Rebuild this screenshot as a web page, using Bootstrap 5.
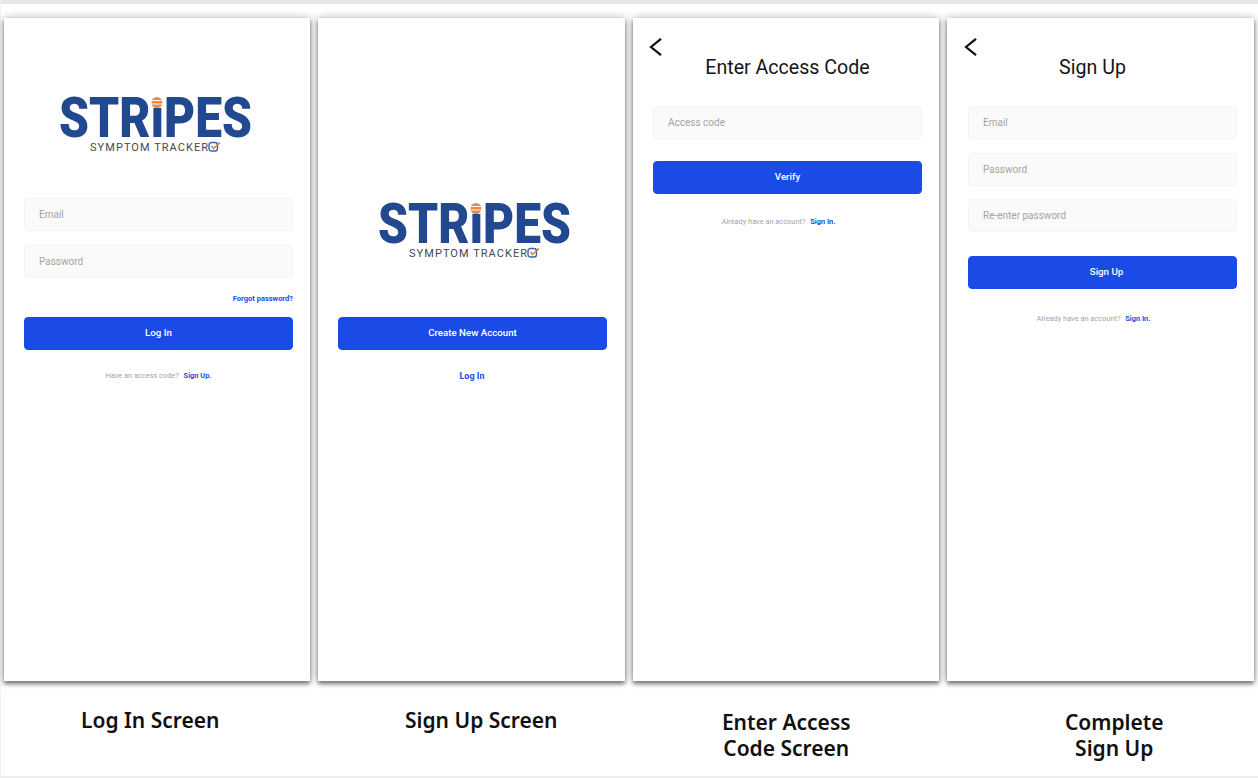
<!DOCTYPE html>
<html lang="en">
<head>
  <meta charset="UTF-8">
  <meta name="viewport" content="width=device-width, initial-scale=1.0">
  <title>Stripes Symptom Tracker — Screens</title>
  <link href="https://cdn.jsdelivr.net/npm/bootstrap@5.3.0/dist/css/bootstrap.min.css" rel="stylesheet">
  <script src="https://cdn.jsdelivr.net/npm/bootstrap@5.3.0/dist/js/bootstrap.bundle.min.js"></script>
  <style>
    html, body {
      height: 778px;
      overflow: hidden;
      background-color: #fff;
    }
    body {
      font-family: Roboto, sans-serif;
    }
    .board {
      height: 778px;
      border-top: 4px solid #e8e6e6;
      border-bottom: 2px solid #eeeeee;
      border-left: 1px solid #f2f2f2;
      padding: 14px 4px 0 3px;
    }
    .phones {
      gap: 8px;
    }
    .phone {
      flex: 0 0 306px;
      height: 663px;
      padding: 0 17px 0 20px;
      background-color: #fff;
      box-shadow: 0 3px 4px rgba(0, 0, 0, .45), 0 0 8px rgba(0, 0, 0, .3);
    }
    .phone-b {
      flex-basis: 307px;
      padding-right: 18px;
    }
    .phone-d {
      flex-basis: 307px;
      padding-left: 21px;
    }
    .logo-box {
      width: 200px;
      margin-left: 35px;
    }
    .logo-main {
      height: 40px;
      font-family: Roboto, sans-serif;
      font-weight: 900;
      font-size: 56px;
      line-height: 40px;
      color: #22488f;
      white-space: nowrap;
      transform: scaleX(.855);
      transform-origin: left center;
    }
    .logo-i {
      position: relative;
      display: inline-block;
    }
    .logo-ball {
      position: absolute;
      left: 1px;
      top: -1px;
      width: 13px;
      height: 11px;
    }
    .logo-sub {
      margin-top: 3px;
      padding-left: 31px;
      height: 14px;
      font-size: 11px;
      line-height: 14px;
      font-weight: 400;
      letter-spacing: 1.05px;
      color: #45474d;
      white-space: nowrap;
    }
    .logo-check {
      width: 13px;
      height: 11px;
      margin-left: -1px;
      vertical-align: -1px;
    }
    .logo-top-a { margin-top: 80px; margin-bottom: 43px; }
    .logo-top-b { margin-top: 186px; margin-bottom: 56px; margin-left: 40px; }
    .field {
      height: 33px;
      margin-bottom: 14px;
      padding: 0 14px;
      font-size: 10px;
      background-color: #fafafa;
      border: 1px solid #f4f4f4;
      border-radius: 4px;
    }
    .field-tight {
      margin-bottom: 13.5px;
    }
    .field::placeholder {
      color: #a3a3a3;
    }
    .go-btn {
      display: block;
      width: 100%;
      height: 33px;
      padding: 0;
      font-size: 9.7px;
      font-weight: 500;
      color: #fff;
      background-color: #1a4be6;
      border-color: #1a4be6;
      border-radius: 4px;
    }
    .blue-link {
      color: #1a4be6;
      font-weight: 700;
      text-decoration: none;
    }
    .forgot {
      margin: 16px 0 13px;
      height: 10px;
      font-size: 7.5px;
      line-height: 10px;
      text-align: right;
    }
    .note {
      margin-top: 21px;
      height: 10px;
      font-size: 7.4px;
      line-height: 10px;
      color: #a3a3a3;
      text-align: center;
    }
    .note .blue-link { margin-left: 3px; }
    .note-plain { font-size: 9px; padding-right: 4px; }
    .note-shift { margin-top: 23px; padding-right: 18px; }
    .note-late { margin-top: 25px; padding-right: 18px; }
    .back-row {
      height: 20px;
      padding-top: 20px;
      box-sizing: content-box;
    }
    .back-icon {
      display: block;
      width: 13px;
      height: 18px;
      margin-left: -4px;
    }
    .screen-title {
      margin: -4px 0 24px;
      height: 28px;
      font-size: 19.6px;
      line-height: 28px;
      font-weight: 400;
      color: #151515;
      text-align: center;
    }
    .title-left { padding-right: 20px; }
    .btn-nudge { padding-left: 8px; }
    .gap-a { margin-top: 22px; }
    .gap-b { margin-top: 24px; }
    .captions {
      gap: 8px;
      margin-top: 26px;
    }
    .caption {
      flex: 0 0 306.5px;
      font-family: "Noto Sans", sans-serif;
      font-weight: 600;
      font-size: 21px;
      line-height: 26px;
      color: #111;
      text-align: center;
    }
    .cap-one { padding-right: 14px; }
    .cap-two { padding-left: 19px; }
    .cap-three { padding-top: 2px; }
    .cap-four { padding-top: 2px; padding-left: 27px; }
  </style>
</head>
<body>
  <div class="board">
    <div class="phones d-flex">

      <div class="phone">
        <div class="logo-box logo-top-a">
          <div class="logo-main">STR<span class="logo-i">ı<svg class="logo-ball" viewBox="0 0 13 11" preserveAspectRatio="none"><ellipse cx="6.5" cy="5.5" rx="6.5" ry="5.5" fill="#e88b4a"/><path d="M0 3.5h13M0 7h13" stroke="#fff" stroke-width="1"/></svg></span>PES</div>
          <div class="logo-sub">SYMPTOM TRACKER<svg class="logo-check" viewBox="0 0 13 11"><rect x="1" y="1.5" width="8.5" height="8.5" rx="2.5" fill="none" stroke="#3a66a8" stroke-width="1.4"/><path d="M3.5 5l2 2.5L12 1.5" fill="none" stroke="#d9763c" stroke-width="1.4"/></svg></div>
        </div>
        <input class="form-control field" type="text" placeholder="Email">
        <input class="form-control field mb-0" type="password" placeholder="Password">
        <div class="forgot"><a class="blue-link" href="#">Forgot password?</a></div>
        <button class="btn go-btn" type="button">Log In</button>
        <div class="note">Have an access code? <a class="blue-link" href="#">Sign Up.</a></div>
      </div>

      <div class="phone phone-b">
        <div class="logo-box logo-top-b">
          <div class="logo-main">STR<span class="logo-i">ı<svg class="logo-ball" viewBox="0 0 13 11" preserveAspectRatio="none"><ellipse cx="6.5" cy="5.5" rx="6.5" ry="5.5" fill="#e88b4a"/><path d="M0 3.5h13M0 7h13" stroke="#fff" stroke-width="1"/></svg></span>PES</div>
          <div class="logo-sub">SYMPTOM TRACKER<svg class="logo-check" viewBox="0 0 13 11"><rect x="1" y="1.5" width="8.5" height="8.5" rx="2.5" fill="none" stroke="#3a66a8" stroke-width="1.4"/><path d="M3.5 5l2 2.5L12 1.5" fill="none" stroke="#d9763c" stroke-width="1.4"/></svg></div>
        </div>
        <button class="btn go-btn" type="button">Create New Account</button>
        <div class="note note-plain"><a class="blue-link" href="#">Log In</a></div>
      </div>

      <div class="phone">
        <div class="back-row"><svg class="back-icon" viewBox="0 0 13 18"><path d="M12 .8L2 9l10 8.2" fill="none" stroke="#111" stroke-width="2.2"/></svg></div>
        <h1 class="screen-title">Enter Access Code</h1>
        <input class="form-control field mb-0" type="text" placeholder="Access code">
        <button class="btn go-btn gap-a" type="button">Verify</button>
        <div class="note note-shift">Already have an account? <a class="blue-link" href="#">Sign In.</a></div>
      </div>

      <div class="phone phone-d">
        <div class="back-row"><svg class="back-icon" viewBox="0 0 13 18"><path d="M12 .8L2 9l10 8.2" fill="none" stroke="#111" stroke-width="2.2"/></svg></div>
        <h1 class="screen-title title-left">Sign Up</h1>
        <input class="form-control field field-tight" type="email" placeholder="Email">
        <input class="form-control field field-tight" type="password" placeholder="Password">
        <input class="form-control field mb-0" type="password" placeholder="Re-enter password">
        <button class="btn go-btn gap-b btn-nudge" type="button">Sign Up</button>
        <div class="note note-late">Already have an account? <a class="blue-link" href="#">Sign In.</a></div>
      </div>
    </div>

    <div class="captions d-flex">
      <div class="caption cap-one">Log In Screen</div>
      <div class="caption cap-two">Sign Up Screen</div>
      <div class="caption cap-three">Enter Access<br>Code Screen</div>
      <div class="caption cap-four">Complete<br>Sign Up</div>
    </div>
  </div>
</body>
</html>
